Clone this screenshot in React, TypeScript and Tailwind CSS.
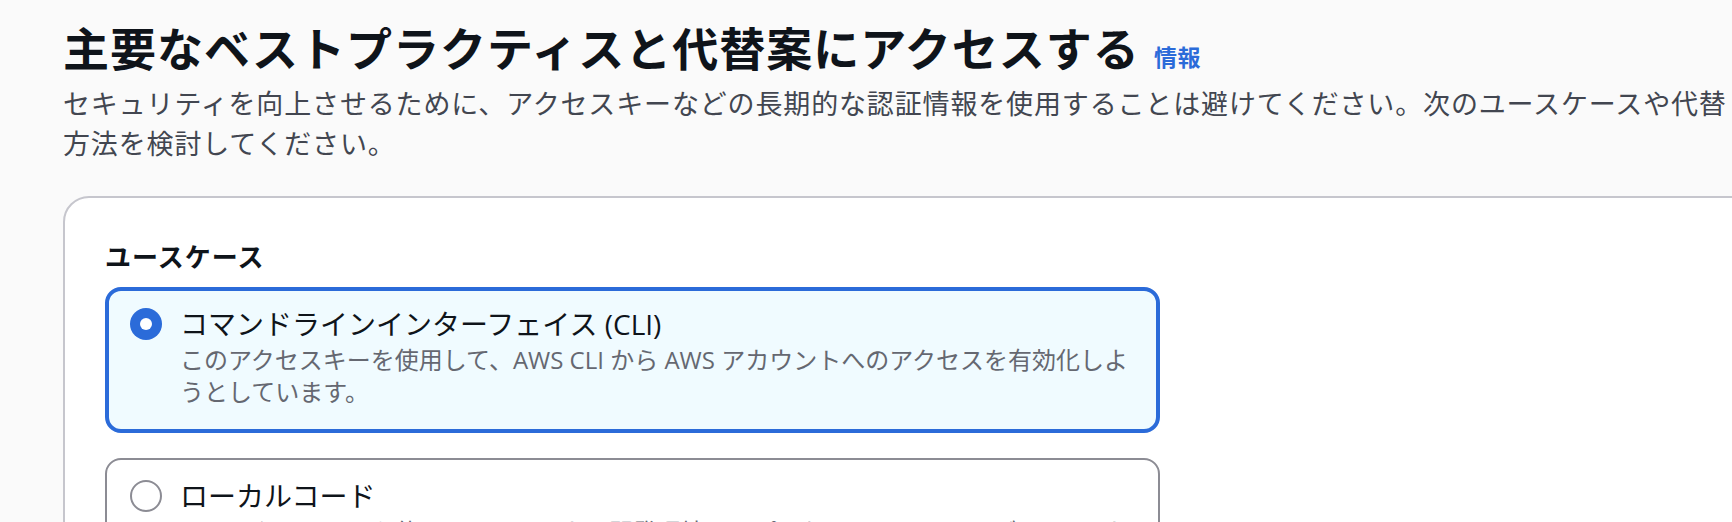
import React from "react";

function RadioSelected() {
  return (
    <div className="h-10 flex items-center shrink-0">
      <span className="w-8 h-8 rounded-full bg-[#2b6bd9] flex items-center justify-center">
        <span className="w-[12px] h-[12px] rounded-full bg-white" />
      </span>
    </div>
  );
}

function RadioEmpty() {
  return (
    <div className="h-10 flex items-center shrink-0">
      <span className="w-8 h-8 rounded-full border-2 border-[#8c8c94] bg-white" />
    </div>
  );
}

export default function App() {
  return (
    <div className="w-[1732px] h-[522px] overflow-hidden bg-[#fafafa] pl-[63px] pt-[20px] font-['Open_Sans','Noto_Sans_CJK_JP',sans-serif]">
      <h1 className="flex items-baseline h-[56px] whitespace-nowrap text-[46px] tracking-[1px] leading-[56px] font-bold text-[#0f141a]">
        <span>主要なベストプラクティスと代替案にアクセスする</span>
        <a className="ml-[14px] text-[23px] tracking-[0.5px] leading-[24px] font-bold text-[#2b6bd9] cursor-pointer">
          情報
        </a>
      </h1>
      <p className="mt-2 whitespace-nowrap text-[27px] tracking-[0.85px] leading-[40px] text-[#424650]">
        セキュリティを向上させるために、アクセスキーなどの長期的な認証情報を使用することは避けてください。次のユースケースや代替
        <br />
        方法を検討してください。
      </p>

      <div className="mt-8 w-[1720px] rounded-[26px] border-2 border-[#c6c6cd] bg-white pl-[40px] pt-[40px] pb-10">
        <div className="text-[26px] tracking-[1px] leading-[38px] font-bold text-[#0f141a]">ユースケース</div>
        <div className="mt-[11px] flex flex-col gap-[25px] w-[1055px]">
          <div className="flex gap-[18px] rounded-[16px] border-4 border-[#2b6bd9] bg-[#f0fbff] pl-[21px] pt-[13px] pb-[21px] pr-6">
            <RadioSelected />
            <div className="flex flex-col">
              <div className="text-[28px] leading-[40px] text-[#0f141a]">
                コマンドラインインターフェイス (CLI)
              </div>
              <div className="text-[24px] leading-[32px] text-[#656871] whitespace-nowrap">
                このアクセスキーを使用して、AWS CLI から AWS アカウントへのアクセスを有効化しよ
                <br />
                うとしています。
              </div>
            </div>
          </div>

          <div className="flex gap-[18px] rounded-[16px] border-2 border-[#8c8c94] bg-white pl-[23px] pt-[16px] pb-[22px] pr-6">
            <RadioEmpty />
            <div className="flex flex-col">
              <div className="text-[28px] leading-[40px] text-[#0f141a]">ローカルコード</div>
              <div className="text-[24px] leading-[32px] text-[#656871]">
                このアクセスキーを使用して、ローカル開発環境のアプリケーションコードが AWS アカウントにアクセスできるようにします。
              </div>
            </div>
          </div>
        </div>
      </div>
    </div>
  );
}
